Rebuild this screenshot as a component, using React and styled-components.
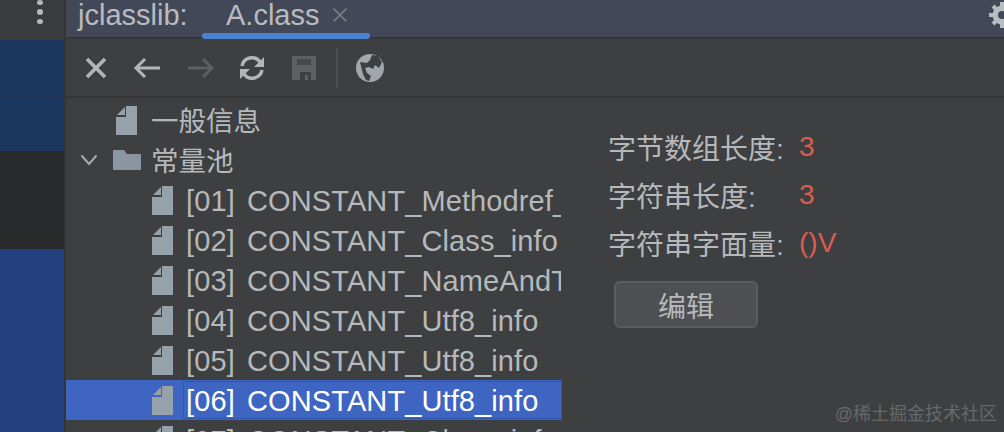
import styled, { createGlobalStyle } from "styled-components";

const GlobalStyle = createGlobalStyle`
  html, body {
    margin: 0;
    padding: 0;
    background: #3e3f41;
  }
  body {
    font-family: "Liberation Sans", "Noto Sans CJK SC", sans-serif;
  }
`;

const Page = styled.div`
  position: relative;
  display: flex;
  width: 1004px;
  height: 432px;
  overflow: hidden;
`;

const Sidebar = styled.div`
  display: flex;
  flex-direction: column;
  flex: 0 0 64px;
  border-right: 2px solid #333536;
`;

const SideBlock = styled.div`
  display: flex;
  justify-content: center;
  height: ${(p) => p.$height}px;
  flex: ${(p) => (p.$grow ? 1 : "none")};
  background: ${(p) => p.$color};
  border-bottom: ${(p) => (p.$line ? "1px solid #24395a" : "none")};
`;

const Dots = styled.div`
  display: flex;
  flex-direction: column;
  gap: 4px;
  margin-left: 16px;
  height: 24px;
  i {
    width: 6px;
    height: 6px;
    border-radius: 50%;
    background: #b4b7ba;
  }
`;

const Main = styled.div`
  display: flex;
  flex-direction: column;
  flex: 1;
  min-width: 0;
`;

const TabBar = styled.div`
  display: flex;
  align-items: flex-start;
  height: 39px;
  padding-left: 12px;
  background: #434859;
  border-bottom: 2px solid #333536;
  box-sizing: border-box;
  position: relative;
  color: #b9bcbf;
  font-size: 29px;
  line-height: 30px;
`;

const TabLabel = styled.span`
  width: 124px;
  white-space: nowrap;
`;

const Tab = styled.div`
  display: flex;
  align-items: flex-start;
  gap: 13px;
  width: 168px;
  height: 39px;
  padding-left: 24px;
  box-sizing: border-box;
  position: relative;
  white-space: nowrap;
  &::after {
    content: "";
    position: absolute;
    left: 0;
    right: 0;
    bottom: 0;
    height: 6px;
    border-radius: 3px;
    background: #4b82cf;
  }
`;

const Gear = styled.svg`
  position: absolute;
  right: -12px;
  top: 1px;
`;

const Toolbar = styled.div`
  display: flex;
  align-items: center;
  height: 57px;
  padding-left: 19px;
  background: #3e3f41;
  border-bottom: 2px solid #333536;
`;

const ToolIcon = styled.svg`
  display: block;
  flex: none;
  margin-right: ${(p) => p.$gap}px;
`;

const ToolDivider = styled.div`
  width: 2px;
  height: 40px;
  margin-right: 17px;
  background: #4c4f51;
`;

const Content = styled.div`
  display: flex;
  flex: 1;
  min-height: 0;
  background: #3e3f41;
`;

const Tree = styled.div`
  flex: 0 0 496px;
  height: 335px;
  overflow: hidden;
  padding-top: 2px;
  box-sizing: border-box;
`;

const Row = styled.div`
  display: flex;
  align-items: center;
  height: 40px;
  padding-left: ${(p) => (p.$child ? 86 : 14)}px;
  background: ${(p) => (p.$selected ? "#3f65c3" : "transparent")};
  white-space: nowrap;
`;

const Toggle = styled.div`
  display: flex;
  align-items: center;
  flex: 0 0 30px;
`;

const IconSlot = styled.div`
  display: flex;
  align-items: center;
  flex: 0 0 ${(p) => p.$width}px;
  padding-left: ${(p) => p.$inset}px;
  box-sizing: border-box;
  svg {
    display: block;
    filter: blur(0.5px);
  }
`;

const Label = styled.div`
  flex: 1;
  height: 38px;
  line-height: 36px;
  padding: ${(p) => (p.$cjk ? 2 : 1)}px 0 0 2px;
  color: ${(p) => (p.$selected ? "#ffffff" : "#b6b9bc")};
  font-size: ${(p) => (p.$cjk ? 27.5 : 29)}px;
  letter-spacing: ${(p) => (p.$cjk ? 0 : 0.11)}px;
  word-spacing: ${(p) => (p.$cjk ? 0 : 4)}px;
  box-sizing: border-box;
  border: ${(p) => (p.$selected ? "1px solid #2f56b4" : "1px solid transparent")};
  overflow: hidden;
`;

const Details = styled.div`
  flex: 1;
  display: flex;
  flex-direction: column;
  align-items: flex-start;
  padding: 25px 0 0 46px;
`;

const Field = styled.div`
  display: flex;
  align-items: center;
  height: 48px;
  font-size: 28px;
  white-space: nowrap;
`;

const FieldName = styled.span`
  flex: 0 0 191px;
  color: #b6b9bc;
`;

const FieldValue = styled.span`
  color: #db5c50;
`;

const EditButton = styled.button`
  width: 144px;
  height: 47px;
  margin: 14px 0 0 6px;
  padding: 0;
  background: #4d4f52;
  border: 2px solid #5a5d5f;
  border-radius: 6px;
  color: #b6b9bc;
  font: 28px "Liberation Sans", "Noto Sans CJK SC", sans-serif;
`;

const Watermark = styled.div`
  position: absolute;
  right: 7px;
  bottom: 6px;
  color: #66696c;
  font-size: 18px;
  line-height: 24px;
`;

const FileIcon = () => (
  <svg width="21" height="29" viewBox="0 0 21 29">
    <path d="M10 0H21V29H0V11H10Z" fill="#97a1ab" />
    <path d="M1 9L9 1V9Z" fill="#97a1ab" />
  </svg>
);

const FolderIcon = () => (
  <svg width="30" height="22" viewBox="0 0 30 22">
    <path d="M1 1H12L15 5H29V21H1Z" fill="#8c96a1" />
  </svg>
);

const rows = [
  "[01] CONSTANT_Methodref_info",
  "[02] CONSTANT_Class_info",
  "[03] CONSTANT_NameAndType_info",
  "[04] CONSTANT_Utf8_info",
  "[05] CONSTANT_Utf8_info",
  "[06] CONSTANT_Utf8_info",
  "[07] CONSTANT_Class_info",
];

const fields = [
  { name: "字节数组长度:", value: "3" },
  { name: "字符串长度:", value: "3" },
  { name: "字符串字面量:", value: "()V" },
];

const App = () => {
  return (
    <Page>
      <GlobalStyle />
      <Sidebar>
        <SideBlock $height={40} $color="#3a3b3c">
          <Dots>
            <i />
            <i />
            <i />
          </Dots>
        </SideBlock>
        <SideBlock $height={56} $color="#1b3760" $line />
        <SideBlock $height={54} $color="#1b3760" />
        <SideBlock $height={98} $color="#2a2b2c" />
        <SideBlock $grow $color="#25407f" />
      </Sidebar>
      <Main>
        <TabBar>
          <TabLabel>jclasslib:</TabLabel>
          <Tab>
            A.class
            <svg width="16" height="16" viewBox="0 0 16 16" style={{ marginTop: 7 }}>
              <path d="M1.5 1.5L14.5 14.5M14.5 1.5L1.5 14.5" stroke="#7d8086" strokeWidth="1.6" />
            </svg>
          </Tab>
          <Gear width="28" height="28" viewBox="0 0 28 28">
            <circle cx="14" cy="14" r="6.5" fill="none" stroke="#b9bcc2" strokeWidth="6" />
            <path d="M14 1V27M1 14H27M5 5L23 23M23 5L5 23" stroke="#b9bcc2" strokeWidth="4" />
            <circle cx="14" cy="14" r="4" fill="#434859" />
          </Gear>
        </TabBar>
        <Toolbar>
          <ToolIcon $gap={26} width="22" height="22" viewBox="0 0 22 22">
            <path d="M2 2L20 20M20 2L2 20" stroke="#b3b6b9" strokeWidth="3.6" />
          </ToolIcon>
          <ToolIcon $gap={26} width="28" height="22" viewBox="0 0 28 22">
            <path d="M12 2L3 11L12 20M3 11H27" fill="none" stroke="#b3b6b9" strokeWidth="3" />
          </ToolIcon>
          <ToolIcon $gap={24} width="28" height="22" viewBox="0 0 28 22">
            <path d="M16 2L25 11L16 20M25 11H1" fill="none" stroke="#5c5f61" strokeWidth="3" />
          </ToolIcon>
          <ToolIcon $gap={26} width="26" height="26" viewBox="0 0 26 26">
            <path d="M3 11A10 10 0 0 1 21 7" fill="none" stroke="#b3b6b9" strokeWidth="3.4" />
            <path d="M25 2V12H15Z" fill="#b3b6b9" />
            <path d="M23 15A10 10 0 0 1 5 19" fill="none" stroke="#b3b6b9" strokeWidth="3.4" />
            <path d="M1 24V14H11Z" fill="#b3b6b9" />
          </ToolIcon>
          <ToolIcon $gap={19} width="26" height="26" viewBox="0 0 26 26" style={{ filter: "blur(0.6px)" }}>
            <path d="M1 1H25V25H1Z" fill="#5e6163" />
            <path d="M6 4H20V10H6Z" fill="#46494b" />
            <path d="M9 17H20V25H9Z" fill="#3e3f41" />
            <path d="M14 20H17V25H14Z" fill="#5e6163" />
          </ToolIcon>
          <ToolDivider />
          <ToolIcon $gap={0} width="30" height="30" viewBox="0 0 30 30">
            <circle cx="15" cy="15" r="14" fill="#a1a7ab" />
            <path d="M5 9L12 10L15 7L17 2L23 3L27 9L24 15L20 12L18 16L14 14L10 15L12 20L16 23L14 28L11 27L8 21Z" fill="#3e3f41" />
          </ToolIcon>
        </Toolbar>
        <Content>
          <Tree>
            <Row>
              <Toggle />
              <IconSlot $width={38} $inset={6}>
                <FileIcon />
              </IconSlot>
              <Label $cjk>一般信息</Label>
            </Row>
            <Row>
              <Toggle>
                <svg width="18" height="12" viewBox="0 0 18 12">
                  <path d="M1.5 1.5L9 10L16.5 1.5" fill="none" stroke="#a9acaf" strokeWidth="2" />
                </svg>
              </Toggle>
              <IconSlot $width={38} $inset={2}>
                <FolderIcon />
              </IconSlot>
              <Label $cjk>常量池</Label>
            </Row>
            {rows.map((row, i) => (
              <Row key={row} $child $selected={i === 5}>
                <IconSlot $width={31} $inset={0}>
                  <FileIcon />
                </IconSlot>
                <Label $selected={i === 5}>{row}</Label>
              </Row>
            ))}
          </Tree>
          <Details>
            {fields.map((field) => (
              <Field key={field.name}>
                <FieldName>{field.name}</FieldName>
                <FieldValue>{field.value}</FieldValue>
              </Field>
            ))}
            <EditButton>编辑</EditButton>
          </Details>
        </Content>
      </Main>
      <Watermark>@稀土掘金技术社区</Watermark>
    </Page>
  );
};

export default App;
